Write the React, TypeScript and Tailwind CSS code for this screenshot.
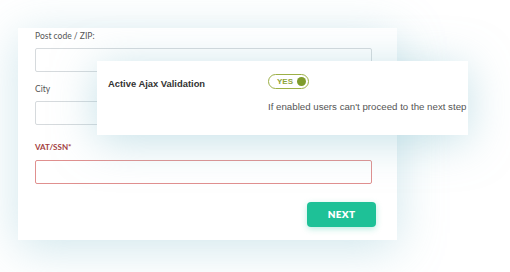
export default function App() {
  return (
    <div className="relative w-[510px] h-[272px] bg-white overflow-hidden pt-[28px] pl-[18px]">
      <div className="w-[379px] h-[212px] bg-white shadow-[0_8px_44px_rgba(140,195,210,0.42)] pl-[17px] pr-[21px] pt-[2px] font-['Lato',sans-serif]">
        <div className="text-[8.5px] leading-[10px] text-[#555] pt-[1px]">Post code / ZIP:</div>
        <div className="mt-[7px] h-[24px] w-[337px] border border-[#d6dadd] rounded-[2px]" />
        <div className="mt-[12px] text-[8.5px] leading-[10px] text-[#555]">City</div>
        <div className="mt-[7px] h-[24px] w-[337px] border border-[#d6dadd] rounded-[2px]" />
        <div className="mt-[17px] text-[8px] leading-[10px] font-bold text-[#a3403e]">VAT/SSN*</div>
        <div className="mt-[8px] h-[24px] w-[337px] border border-[#e0908f] rounded-[2px]" />
        <div className="mt-[18px] flex justify-end">
          <button className="w-[69px] h-[25px] rounded-[4px] bg-[#1ec197] text-white text-[10px] font-extrabold tracking-[0.3px] shadow-[0_2px_6px_rgba(30,193,151,0.3)]">
            NEXT
          </button>
        </div>
      </div>

      <div className="absolute left-[97px] top-[61px] w-[371px] h-[74px] bg-white shadow-[0_6px_44px_rgba(140,195,210,0.5)] flex font-['Liberation_Sans',sans-serif]">
        <div className="w-[171px] pl-[11px] pt-[16px] text-[9.4px] font-bold text-[#333]">Active Ajax Validation</div>
        <div className="pt-[13px]">
          <div className="w-[41px] h-[15px] rounded-full border border-[#9cb046] flex items-center justify-between pl-[8px] pr-[2px]">
            <span className="text-[8px] font-bold text-[#8ea53a] leading-none">YES</span>
            <span className="w-[9px] h-[9px] rounded-full bg-[#7f9c2c]" />
          </div>
          <div className="mt-[11px] text-[9.7px] text-[#555] whitespace-nowrap">If enabled users can't proceed to the next step</div>
        </div>
      </div>
    </div>
  );
}
